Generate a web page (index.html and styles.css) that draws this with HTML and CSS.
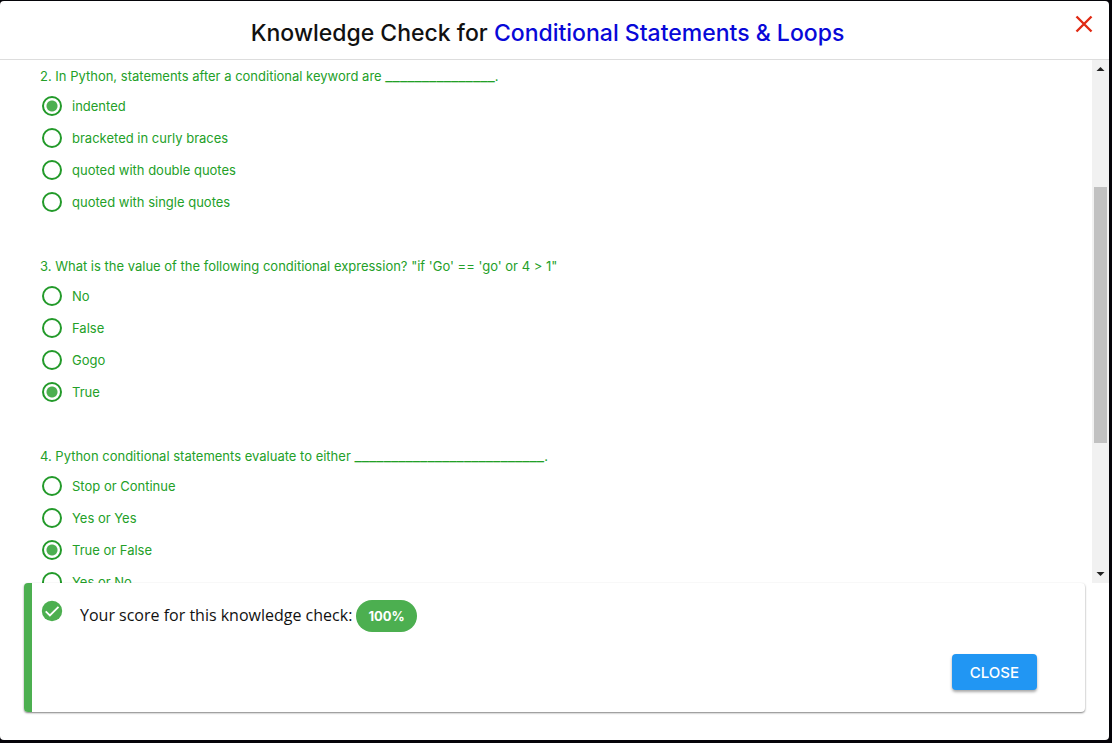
FILE: index.html
```
<!DOCTYPE html>
<html lang="en">
<head>
<meta charset="utf-8">
<title>Knowledge Check</title>
<link rel="stylesheet" href="styles.css">
</head>
<body>
<main class="dialog">
  <header class="dialog-header">
    <h1 class="title">Knowledge Check for <span class="topic">Conditional Statements &amp; Loops</span></h1>
    <button class="dismiss" type="button" aria-label="Dismiss">
      <svg width="18" height="18" viewBox="0 0 18 18"><path d="M1.500 1.500l15 15M16.500 1.500l-15 15" stroke="#e02a14" stroke-width="2.400" fill="none"/></svg>
    </button>
  </header>
  <div class="content">
    <form class="questions">
      <fieldset class="question">
        <legend class="prompt">2. In Python, statements after a conditional keyword are <span class="blank">_______________</span>.</legend>
        <label class="option"><input class="radio" type="radio" name="q2" checked>indented</label>
        <label class="option"><input class="radio" type="radio" name="q2">bracketed in curly braces</label>
        <label class="option"><input class="radio" type="radio" name="q2">quoted with double quotes</label>
        <label class="option"><input class="radio" type="radio" name="q2">quoted with single quotes</label>
      </fieldset>
      <fieldset class="question">
        <legend class="prompt">3. What is the value of the following conditional expression? "if 'Go' == 'go' or 4 &gt; 1"</legend>
        <label class="option"><input class="radio" type="radio" name="q3">No</label>
        <label class="option"><input class="radio" type="radio" name="q3">False</label>
        <label class="option"><input class="radio" type="radio" name="q3">Gogo</label>
        <label class="option"><input class="radio" type="radio" name="q3" checked>True</label>
      </fieldset>
      <fieldset class="question">
        <legend class="prompt">4. Python conditional statements evaluate to either <span class="blank">__________________________</span>.</legend>
        <label class="option"><input class="radio" type="radio" name="q4">Stop or Continue</label>
        <label class="option"><input class="radio" type="radio" name="q4">Yes or Yes</label>
        <label class="option"><input class="radio" type="radio" name="q4" checked>True or False</label>
        <label class="option"><input class="radio" type="radio" name="q4">Yes or No</label>
      </fieldset>
    </form>
    <div class="scrollbar" aria-hidden="true">
      <svg class="arrow" width="17" height="17" viewBox="0 0 17 17"><path d="M4.500 11h8L8.500 7z" fill="#222"/></svg>
      <div class="track">
        <div class="before-thumb"></div>
        <div class="thumb"></div>
        <div class="after-thumb"></div>
      </div>
      <svg class="arrow" width="17" height="17" viewBox="0 0 17 17"><path d="M4.500 6h8l-4 4z" fill="#222"/></svg>
    </div>
  </div>
  <section class="result">
    <div class="score-row">
      <svg class="check" width="24" height="24" viewBox="0 0 24 24"><circle cx="12" cy="12" r="10.200" fill="#4caf50"/><path d="M5.700 12.300l4.200 4.100 8.600-8.600" stroke="#fff" stroke-width="1.800" fill="none"/></svg>
      <p class="score">Your score for this knowledge check: <strong class="chip">100%</strong></p>
    </div>
    <div class="actions"><button class="close" type="button">CLOSE</button></div>
  </section>
</main>
</body>
</html>
```
FILE: styles.css
```
* { box-sizing: border-box; }
body {
  margin: 0;
  padding: 1px 3px 3px 0;
  height: 100vh;
  background: #050409;
  font-family: Inter, "Open Sans", sans-serif;
  color: #111;
}
.dialog {
  display: flex;
  flex-direction: column;
  height: 100%;
  background: #fff;
  border-radius: 4px;
  overflow: hidden;
}
.dialog-header {
  display: flex;
  align-items: center;
  flex: none;
  padding: 10px 16px 4px 20px;
  height: 59px;
  border-bottom: 1px solid #ddd;
}
.title {
  flex: 1;
  margin: 0;
  text-align: center;
  font-size: 23px;
  line-height: 32px;
  font-weight: 500;
}
.topic { color: #0808d8; }
.dismiss {
  display: flex;
  align-self: flex-start;
  padding: 4px 0;
  border: 0;
  background: none;
}
.content {
  display: flex;
  flex: 1;
  min-height: 0;
}
.questions {
  flex: 1;
  padding: 6px 40px 0;
  overflow: hidden;
  color: #23a028;
  font-size: 13px;
  line-height: 20px;
}
.question {
  margin: 0 0 38px;
  padding: 0;
  border: 0;
}
.prompt {
  height: 20px;
  margin-bottom: 4px;
  padding: 0;
}
.blank {
  font-size: 16px;
  line-height: 16px;
}
.option {
  display: flex;
  align-items: center;
  gap: 10px;
  height: 32px;
  padding-left: 2px;
}
.radio {
  appearance: none;
  width: 20px;
  height: 20px;
  margin: 0;
  border: 2px solid #239a2a;
  border-radius: 50%;
}
.radio:checked { background: radial-gradient(circle, #4caf50 5px, transparent 6px); }
.scrollbar {
  display: flex;
  flex-direction: column;
  width: 17px;
  background: #f1f1f1;
}
.arrow { flex: none; }
.track {
  display: flex;
  flex: 1;
  flex-direction: column;
  padding: 0 2px;
}
.before-thumb { flex: 110; }
.thumb {
  flex: 257;
  background: #c1c1c1;
}
.after-thumb { flex: 123; }
.result {
  display: flex;
  flex: none;
  flex-direction: column;
  gap: 22px;
  margin: 0 24px 28px;
  padding: 16px 48px 22px 8px;
  border-left: 8px solid #4caf50;
  border-radius: 4px;
  box-shadow: 0 1px 2px rgba(0, 0, 0, 0.5);
}
.score-row {
  display: flex;
  gap: 16px;
}
.check { flex: none; }
.score {
  margin: 0;
  font-family: "Open Sans", sans-serif;
  font-size: 16px;
  line-height: 32px;
}
.chip {
  display: inline-block;
  padding: 0 12px;
  border-radius: 16px;
  background: #4caf50;
  color: #fff;
  font-family: Inter, "Open Sans", sans-serif;
  font-size: 13px;
}
.actions {
  display: flex;
  justify-content: flex-end;
}
.close {
  height: 36px;
  padding: 0 18px;
  border: 0;
  border-radius: 4px;
  background: #2196f3;
  box-shadow: 0 2px 3px rgba(0, 0, 0, 0.35);
  color: #fff;
  font: 500 15px Inter, "Open Sans", sans-serif;
}
```
